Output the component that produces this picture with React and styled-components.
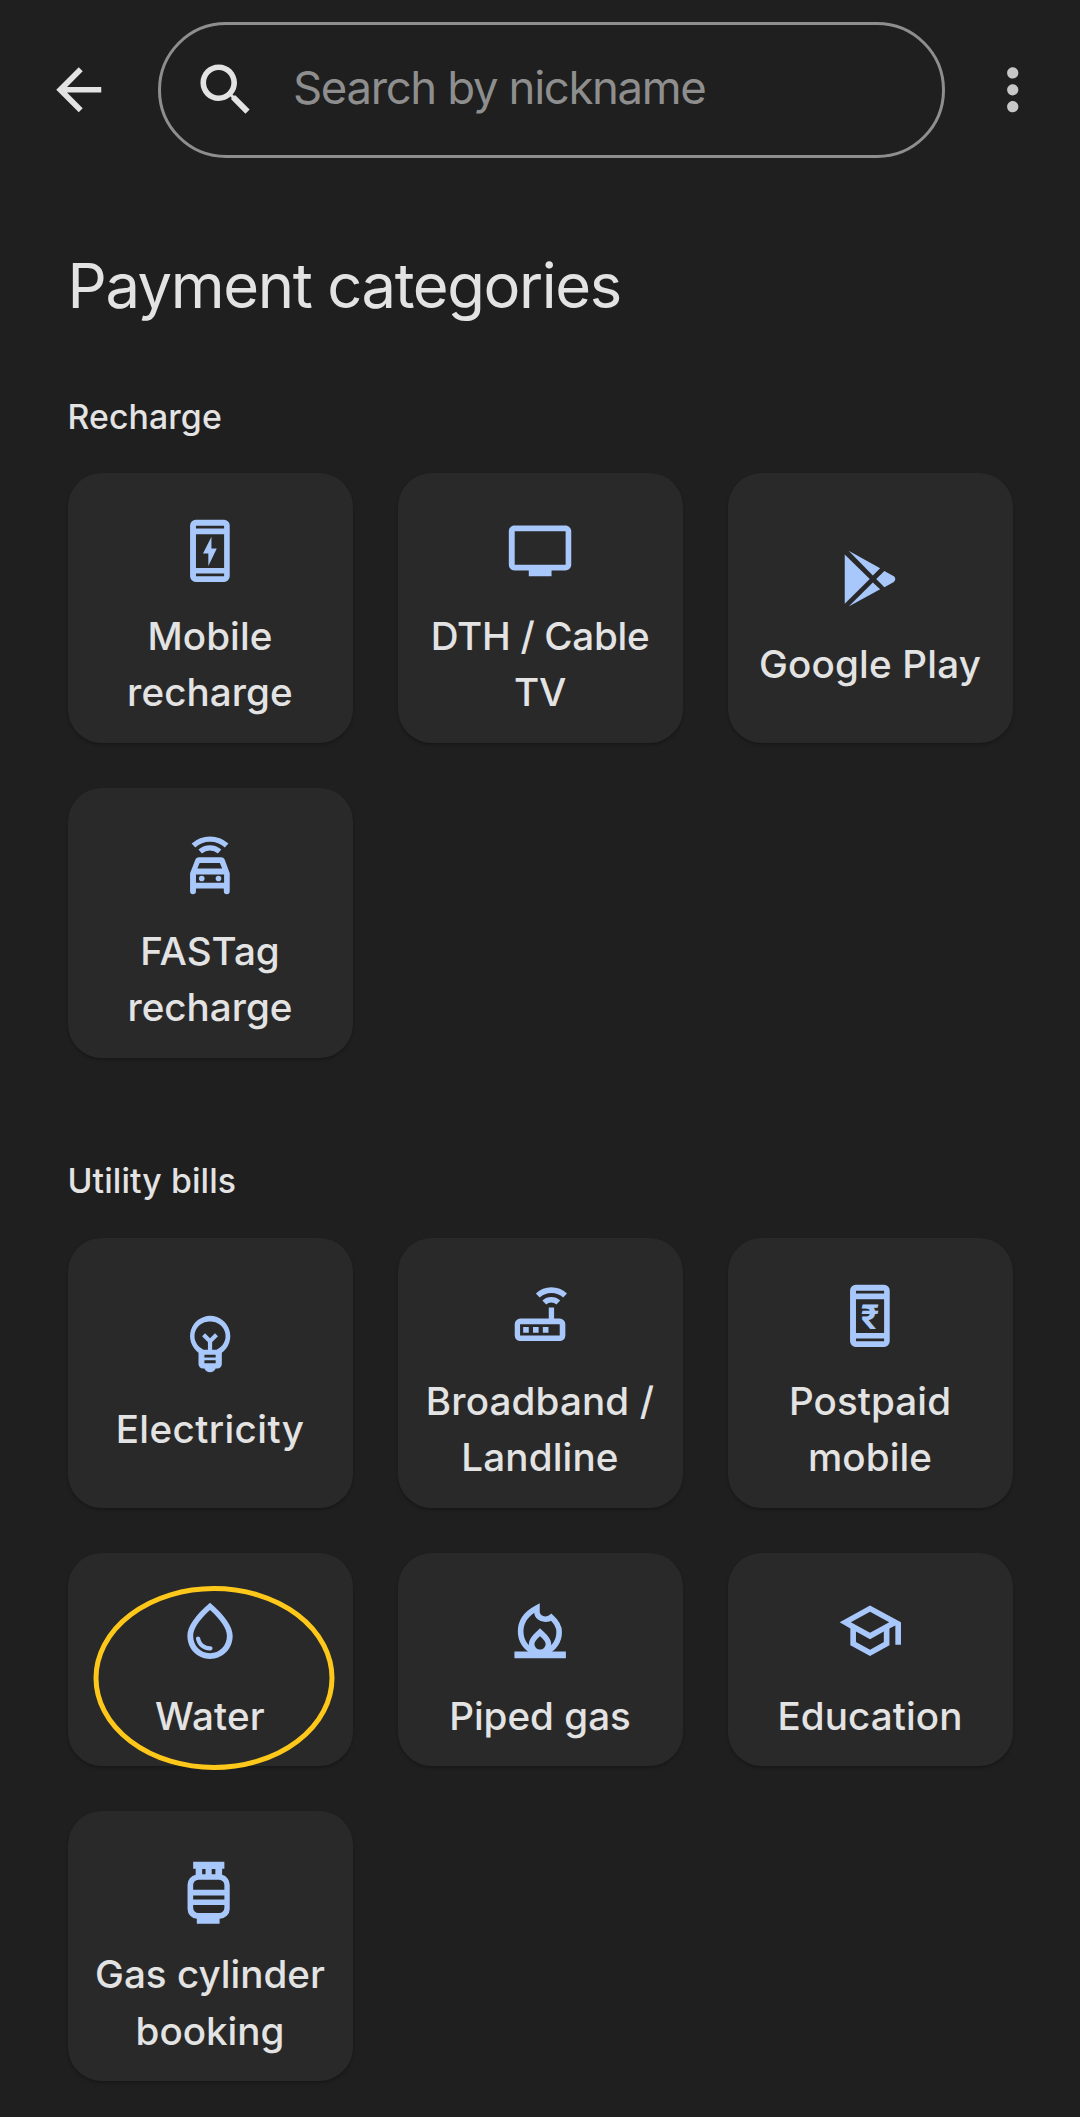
import styled, { createGlobalStyle } from "styled-components";

const Rupee = styled.text`
    font-family:'Roboto',sans-serif;
    font-size:12.2px;
    font-weight:700;
`;

const ICONS = {
    mobile: (
        <>
            <path fillRule="evenodd" d="M7 1h10.1a2 2 0 0 1 2 2v18.1a2 2 0 0 1-2 2H7a2 2 0 0 1-2-2V3a2 2 0 0 1 2-2zm.1 2.1v1h10v-1zm0 3v12h10v-12zm0 14v1h10v-1z" />
            <path d="M12.6 7L9.6 13h1.9v4.4l3-6.2h-1.9z" />
        </>
    ),
    tv: <path d="M21.1 3H3c-1.1 0-2 .9-2 2v12c0 1.1.9 2 2 2h5.1v2.1h8.1V19h4.9c1.1 0 2.1-.9 2.1-2V5c0-1.1-1-2-2.1-2zm.1 14H3.1V5.1h18.1z" />,
    play: (
        <>
            <path d="M3.1 3.4v17.5l8.9-8.8z" />
            <path d="M4.5 2l11.2 6.3-2.6 2.5z" />
            <path d="M4.5 21.9l11.2-6.2-2.6-2.4z" />
            <path d="M17.2 9.2l3.2 1.8c.9.5.9 1.7 0 2.2L17.2 15l-2.9-2.9z" />
        </>
    ),
    fastag: (
        <>
            <path fill="none" stroke="currentColor" strokeWidth="1.9" d="M6.2 4.8a8.8 8.8 0 0 1 11.8 0M8.6 6.9a5.3 5.3 0 0 1 6.9 0" />
            <path fillRule="evenodd" d="M8.2 9h7.8c.7 0 1.2.4 1.4 1l1.7 4.7v6.4a1 1 0 0 1-2.1 0v-1H7.1v1a1 1 0 0 1-2.1 0v-6.4L6.8 10c.2-.6.7-1 1.4-1zm.2 2l-.8 2h8.8l-.8-2zM7.1 15.1V18h10v-2.9z" />
            <circle cx="9.15" cy="16.55" r="1" />
            <circle cx="15.1" cy="16.55" r="1" />
        </>
    ),
    bulb: (
        <>
            <path fillRule="evenodd" d="M12.1 2a7.3 7.3 0 0 1 4.2 13.2v4c0 .9-.7 1.6-1.6 1.6h-.6c-.3.8-1.1 1.3-2 1.3s-1.7-.5-2-1.3h-.5c-.9 0-1.6-.7-1.6-1.6v-4A7.3 7.3 0 0 1 12.1 2zm0 2.1a5.2 5.2 0 0 0-2.3 10h4.6a5.2 5.2 0 0 0-2.3-10zm-2 11.8v1h4v-1zm0 2v1h4v-1z" />
            <path fill="none" stroke="currentColor" strokeWidth="1.5" d="M12.1 14.5v-3.3M9.8 8.8l2.3 2.3 2.3-2.3" />
        </>
    ),
    router: (
        <>
            <path fill="none" stroke="currentColor" strokeWidth="2" d="M11.3 4.8a7.1 7.1 0 0 1 9.7 0M13.6 7.3a3.7 3.7 0 0 1 5 0" />
            <path fillRule="evenodd" d="M15.2 9.1h1.9V13h2a2 2 0 0 1 2 2v4a2 2 0 0 1-2 2h-14a2 2 0 0 1-2-2v-4a2 2 0 0 1 2-2h10.1zM5 15v4h14.1v-4z" />
            <path d="M6.1 16h2v2h-2zM9.6 16h2v2h-2zM13.1 16h2v2h-2z" />
        </>
    ),
    postpaid: (
        <>
            <path fillRule="evenodd" d="M7 1h10.1a2 2 0 0 1 2 2v18.1a2 2 0 0 1-2 2H7a2 2 0 0 1-2-2V3a2 2 0 0 1 2-2zm.1 2.1v1h10v-1zm0 3v12h10v-12zm0 14v1h10v-1z" />
            <Rupee x="12.1" y="16.7" textAnchor="middle">₹</Rupee>
        </>
    ),
    water: <path d="M12.1 2c-5.4 4.55-8.05 8.48-8.05 11.8 0 4.98 3.8 8.2 8.05 8.2s8.05-3.22 8.05-8.2c0-3.32-2.7-7.25-8.05-11.8zm0 18c-3.35 0-6-2.57-6-6.2 0-2.34 1.95-5.44 6-9.14 4.05 3.7 6 6.79 6 9.14 0 3.63-2.65 6.2-6 6.2zm-4.27-6c.37 0 .67.26.74.62.41 2.22 2.28 2.98 3.64 2.87.43-.02.79.32.79.75 0 .4-.32.73-.72.75-2.13.13-4.62-1.09-5.19-4.12-.08-.45.28-.87.74-.87z" />,
    gas: (
        <>
            <path d="M3 19.4h18.3v2.4H3z" />
            <g fill="none" stroke="currentColor" strokeWidth="2">
                <path d="M10.3 19.6C6.9 18.4 5.2 15.4 5.2 12.2c0-3.4 2.2-6.4 5.8-8.3v1.3c0 1.6 1.4 2.7 3 2.7.8 0 1.5-.2 2.1-.7 1.6 1.4 2.8 3.1 2.8 5.2 0 3.2-1.8 6.1-5 7.2" />
                <path d="M12.1 12.5c-1.3 1.3-3 2.4-3 4.2a3 3 0 0 0 6 0c0-1.8-1.7-2.9-3-4.2z" />
            </g>
        </>
    ),
    education: <path d="M12.1 3L1.3 9l3.8 2.18v6L12.1 21l6.9-3.82v-6l2.1-1.09V17h2V9L12.1 3zm6.82 6L12.1 12.72 5.28 9 12.1 5.28 18.92 9zM17 15.99l-4.9 2.73-5-2.73v-3.72l5 2.73 4.9-2.73v3.72z" />,
    cylinder: (
        <path fillRule="evenodd" d="M6.1 2h11.1v2.5h-.8v2.2a3.6 3.6 0 0 1 2.7 3.5v8.6a3.5 3.5 0 0 1-3.5 3.5h-.1v1.8H7.4v-1.8a3.5 3.5 0 0 1-3.3-3.5v-8.6a3.6 3.6 0 0 1 2.9-3.5V4.5h-.9zM9.3 4.6v1.9h1.2V4.6zm3.4 0v1.9H14V4.6zM8 8.4a1.9 1.9 0 0 0-1.9 1.9V12h11.1v-1.7a1.9 1.9 0 0 0-1.9-1.9zM6.1 14v1.5h11.1V14zm0 3.4v1a1.9 1.9 0 0 0 1.9 1.9h7.3a1.9 1.9 0 0 0 1.9-1.9v-1z" />
    ),
};

const SECTIONS = [
    {
        title: "Recharge",
        items: [
            { icon: "mobile", label: "Mobile recharge", tracking: 0.1 },
            { icon: "tv", label: "DTH / Cable TV", tracking: -0.3 },
            { icon: "play", label: "Google Play", tracking: 0.2 },
            { icon: "fastag", label: "FASTag recharge" },
        ],
    },
    {
        title: "Utility bills",
        items: [
            { icon: "bulb", label: "Electricity", tracking: 0.4 },
            { icon: "router", label: "Broadband / Landline", tracking: 0.15 },
            { icon: "postpaid", label: "Postpaid mobile", tracking: 0.1 },
            { icon: "water", label: "Water", tracking: 0.2, marked: true },
            { icon: "gas", label: "Piped gas" },
            { icon: "education", label: "Education", tracking: 0.1 },
            { icon: "cylinder", label: "Gas cylinder booking" },
        ],
    },
];

function App() {
    return (
        <Screen>
            <GlobalStyle />
            <TopBar>
                <IconButton>
                    <BarIcon viewBox="0 0 24 24">
                        <path d="M20 11H7.83l5.59-5.59L12 4l-8 8 8 8 1.41-1.41L7.83 13H20v-2z" />
                    </BarIcon>
                </IconButton>
                <SearchBox>
                    <BarIcon viewBox="0 0 24 24">
                        <path d="M15.5 14h-.79l-.28-.27C15.41 12.59 16 11.11 16 9.5 16 5.91 13.09 3 9.5 3S3 5.91 3 9.5 5.91 16 9.5 16c1.61 0 3.09-.59 4.23-1.57l.27.28v.79l5 4.99L20.49 19l-4.99-5zm-6 0C7.01 14 5 11.99 5 9.5S7.01 5 9.5 5 14 7.01 14 9.5 11.99 14 9.5 14z" />
                    </BarIcon>
                    <span>Search by nickname</span>
                </SearchBox>
                <IconButton $muted>
                    <BarIcon viewBox="0 0 24 24">
                        <path d="M12 8c1.1 0 2-.9 2-2s-.9-2-2-2-2 .9-2 2 .9 2 2 2zm0 2c-1.1 0-2 .9-2 2s.9 2 2 2 2-.9 2-2-.9-2-2-2zm0 6c-1.1 0-2 .9-2 2s.9 2 2 2 2-.9 2-2-.9-2-2-2z" />
                    </BarIcon>
                </IconButton>
            </TopBar>
            <Title>Payment categories</Title>
            {SECTIONS.map((section) => (
                <Section key={section.title}>
                    <SectionTitle>{section.title}</SectionTitle>
                    <Grid>
                        {section.items.map((item) => (
                            <Card key={item.label}>
                                <CardIcon viewBox="0 0 24 24">{ICONS[item.icon]}</CardIcon>
                                <Label $tracking={item.tracking}>{item.label}</Label>
                                {item.marked && (
                                    <Marker viewBox="0 0 242 186">
                                        <ellipse cx="121" cy="93" rx="118" ry="89.5" />
                                    </Marker>
                                )}
                            </Card>
                        ))}
                    </Grid>
                </Section>
            ))}
        </Screen>
    )
}

const GlobalStyle = createGlobalStyle`
    *{
        box-sizing:border-box;
    }
    body{
        margin:0;
        background-color:#1f1f1f;
    }
`;

const Screen = styled.div`
    width:1080px;
    height:2117px;
    overflow:hidden;
    background-color:#1f1f1f;
    color:#e3e3e3;
    font-family:'Inter',sans-serif;
`;

const TopBar = styled.header`
    display:flex;
    align-items:center;
    height:180px;
    padding:0 33.75px 0 45px;
`;

const IconButton = styled.button`
    display:flex;
    padding:0;
    border:none;
    background:none;
    color:${(p) => (p.$muted ? "#c7c7c7" : "#e3e3e3")};
`;

const BarIcon = styled.svg`
    width:67.5px;
    height:67.5px;
    flex:none;
    fill:currentColor;
`;

const SearchBox = styled.div`
    display:flex;
    flex:1;
    align-items:center;
    gap:34px;
    height:136px;
    margin:0 34px 0 45px;
    padding-left:31px;
    border:3px solid #8e8e8e;
    border-radius:68px;
    span{
        color:#8e8e8e;
        font-size:45.5px;
        line-height:60px;
        letter-spacing:-1.35px;
        padding-bottom:4px;
    }
`;

const Title = styled.h1`
    margin:67px 0 0;
    padding:0 67.5px;
    font-size:61.5px;
    line-height:78px;
    font-weight:400;
    letter-spacing:-1.4px;
`;

const Section = styled.section`
    padding:68.5px 67.5px 0;
    & + &{
        padding-top:100px;
    }
`;

const SectionTitle = styled.h2`
    margin:0 0 33.5px;
    font-size:33.8px;
    line-height:46px;
    font-weight:500;
    letter-spacing:0.1px;
`;

const Grid = styled.div`
    display:grid;
    grid-template-columns:repeat(3, 285px);
    gap:45px;
`;

const Card = styled.div`
    position:relative;
    display:flex;
    flex-direction:column;
    align-items:center;
    justify-content:center;
    padding:44.25px 20px 22.5px;
    border-radius:33.75px;
    background-color:#292929;
    box-shadow:0 2px 3px rgba(0, 0, 0, 0.25);
`;

const CardIcon = styled.svg`
    width:67.5px;
    height:67.5px;
    margin-bottom:23.25px;
    overflow:visible;
    fill:currentColor;
    color:#a8c7fa;
`;

const Label = styled.span`
    font-size:38.6px;
    line-height:56.25px;
    font-weight:500;
    text-align:center;
    letter-spacing:${(p) => p.$tracking || 0}px;
`;

// ring around the card, it runs a little over the lower edge
const Marker = styled.svg`
    position:absolute;
    left:25px;
    top:32px;
    width:242px;
    height:186px;
    overflow:visible;
    ellipse{
        fill:none;
        stroke:#fec81b;
        stroke-width:5;
    }
`;

export default App;
